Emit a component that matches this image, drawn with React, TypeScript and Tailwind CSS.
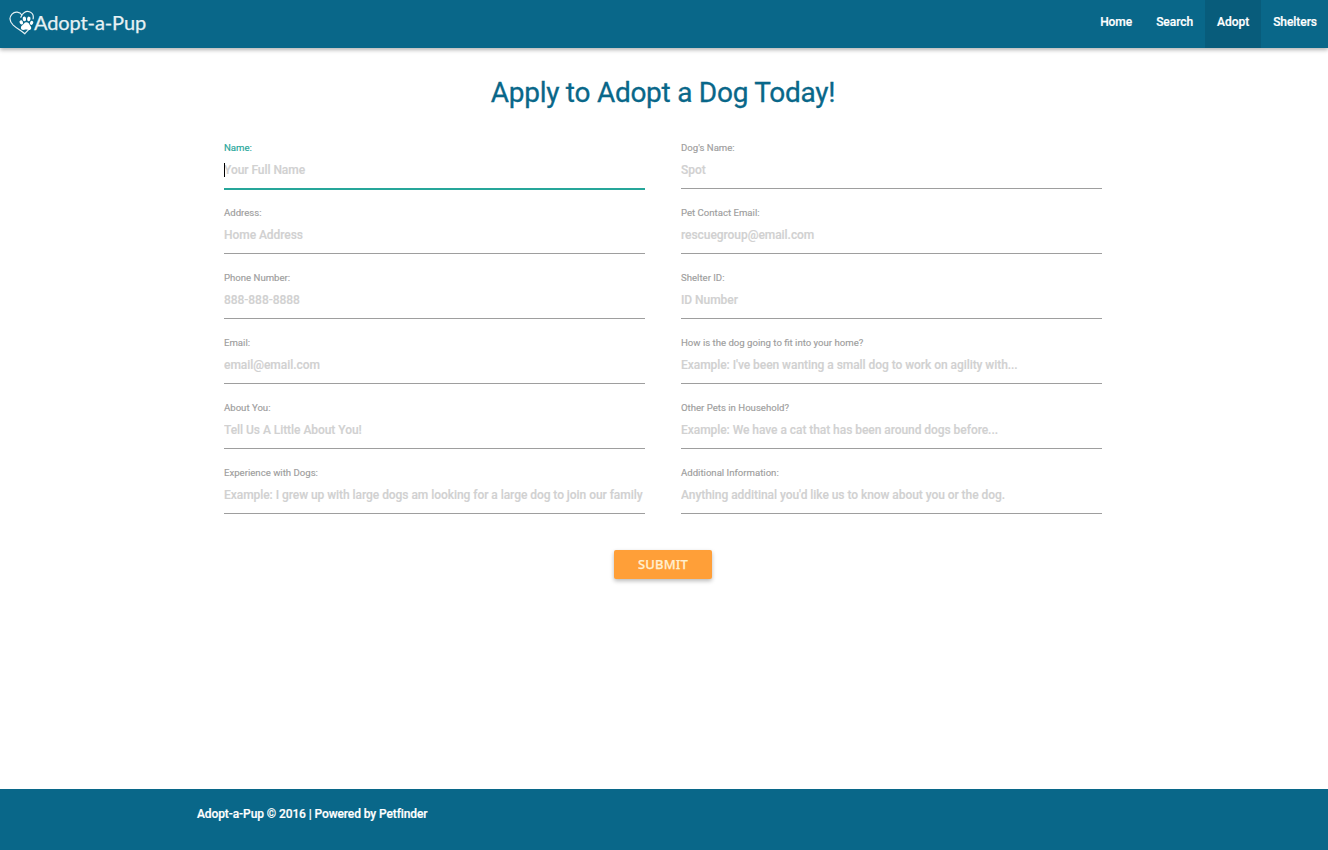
const left = [
  ["Name:", "Your Full Name"],
  ["Address:", "Home Address"],
  ["Phone Number:", "888-888-8888"],
  ["Email:", "email@email.com"],
  ["About You:", "Tell Us A Little About You!"],
  ["Experience with Dogs:", "Example: I grew up with large dogs am looking for a large dog to join our family"],
];
const right = [
  ["Dog's Name:", "Spot"],
  ["Pet Contact Email:", "rescuegroup@email.com"],
  ["Shelter ID:", "ID Number"],
  ["How is the dog going to fit into your home?", "Example: I've been wanting a small dog to work on agility with..."],
  ["Other Pets in Household?", "Example: We have a cat that has been around dogs before..."],
  ["Additional Information:", "Anything additinal you'd like us to know about you or the dog."],
];

function Logo() {
  return (
    <svg className="h-[26px] w-[26px] shrink-0" viewBox="0 0 26 26" fill="none">
      <path
        d="M13 5.2C10.8 1.6 5.8 1.2 3 4.1C-.2 7.7 1.1 12 4.2 15.1C7.6 18.3 12 20.6 15.8 23.8C17 21.9 19.2 20.2 21 18.2M11.8 7.2C13.2 2.9 17 .6 20.4 1.8C23.6 2.9 24.8 5.6 24.1 9"
        stroke="#e7f1f4"
        strokeWidth="1.2"
        strokeLinecap="round"
        strokeLinejoin="round"
      />
      <g fill="#fff">
        <ellipse cx="12.3" cy="12.4" rx="1.7" ry="2.2" transform="rotate(-25 12.3 12.4)" />
        <ellipse cx="15.4" cy="8.9" rx="1.7" ry="2.3" transform="rotate(-8 15.4 8.9)" />
        <ellipse cx="19.8" cy="8.9" rx="1.7" ry="2.3" transform="rotate(12 19.8 8.9)" />
        <ellipse cx="22.6" cy="12.9" rx="1.6" ry="2.1" transform="rotate(25 22.6 12.9)" />
        <path d="M17.4 12.2C15.2 12.2 14.7 14.3 13.1 15.4C11 16.9 11.9 20.1 14.3 19.9C15.8 19.8 16.3 19.3 17.6 19.6C19.2 20 21.3 20.6 22.1 18.8C22.8 17 21.2 16 20.6 14.7C20 13.3 19.2 12.2 17.4 12.2Z" />
      </g>
    </svg>
  );
}

function Field({ label, hint, active }: { label: string; hint: string; active?: boolean }) {
  return (
    <label className="relative block h-[65px]">
      <span className={`block h-[15px] text-[9.6px] leading-[14px] [-webkit-text-stroke:0.15px] ${active ? "text-[#26a69a]" : "text-[#9e9e9e]"}`}>{label}</span>
      <input
        placeholder={hint}
        className={`block w-full bg-transparent pb-1 text-[12px] font-medium tracking-[-0.05px] outline-none [-webkit-text-stroke:0.15px_#d1d1d1] placeholder:text-[#d1d1d1] ${active ? "h-[34px] border-b-2 border-[#26a69a]" : "h-[33px] border-b border-[#9e9e9e]"}`}
      />
      {active && <span className="absolute left-0 top-[22px] h-[14px] w-px bg-black" />}
    </label>
  );
}

export default function App() {
  return (
    <div className="flex h-[850px] flex-col bg-white font-['Roboto',sans-serif]">
      <header className="relative flex h-12 shrink-0 justify-between bg-[#096789] shadow-[0_2px_4px_rgba(0,0,0,0.3)]">
        <a className="flex pl-[9px] pt-[10px] text-white">
          <Logo />
          <span className="-ml-px whitespace-nowrap font-['Lato',sans-serif] text-[20px] leading-[25px] tracking-[-0.1px] text-[#e7f1f4] [-webkit-text-stroke:0.25px]">Adopt-a-Pup</span>
        </a>
        <nav className="flex text-[12px] font-medium leading-[44px] tracking-[-0.05px] text-white [-webkit-text-stroke:0.2px]">
          <a className="px-[12px]">Home</a>
          <a className="px-[12px]">Search</a>
          <a className="bg-[#085c7b] px-[12px]">Adopt</a>
          <a className="pl-[12px] pr-[11px]">Shelters</a>
        </nav>
      </header>
      <main className="flex-1">
        <h1 className="mt-[29px] text-center text-[28px] leading-8 tracking-[-0.26px] text-[#096789] [-webkit-text-stroke:0.3px]"><span className="relative -left-px">Apply to Adopt a Dog Today!</span></h1>
        <form className="ml-56 mt-8 w-[878px]">
          <div className="grid grid-cols-2 gap-x-9">
            <div>
              {left.map(([l, h], i) => <Field key={l} label={l} hint={h} active={i === 0} />)}
            </div>
            <div>
              {right.map(([l, h]) => <Field key={l} label={l} hint={h} />)}
            </div>
          </div>
          <div className="mt-[19px] flex justify-center">
            <button type="button" className="h-[29px] w-[98px] rounded-[2px] bg-[#ff9f38] font-['Noto_Sans',sans-serif] text-[13px] font-medium tracking-[0.15px] text-[#fff0cf] shadow-[0_2px_4px_rgba(0,0,0,0.28)] [-webkit-text-stroke:0.25px]">SUBMIT</button>
          </div>
        </form>
      </main>
      <footer className="h-[61px] shrink-0 bg-[#096789] pl-[197px] pt-[17px] text-[12px] font-medium leading-4 tracking-[-0.1px] text-white [-webkit-text-stroke:0.2px]">Adopt-a-Pup © 2016 | Powered by Petfinder</footer>
    </div>
  );
}
